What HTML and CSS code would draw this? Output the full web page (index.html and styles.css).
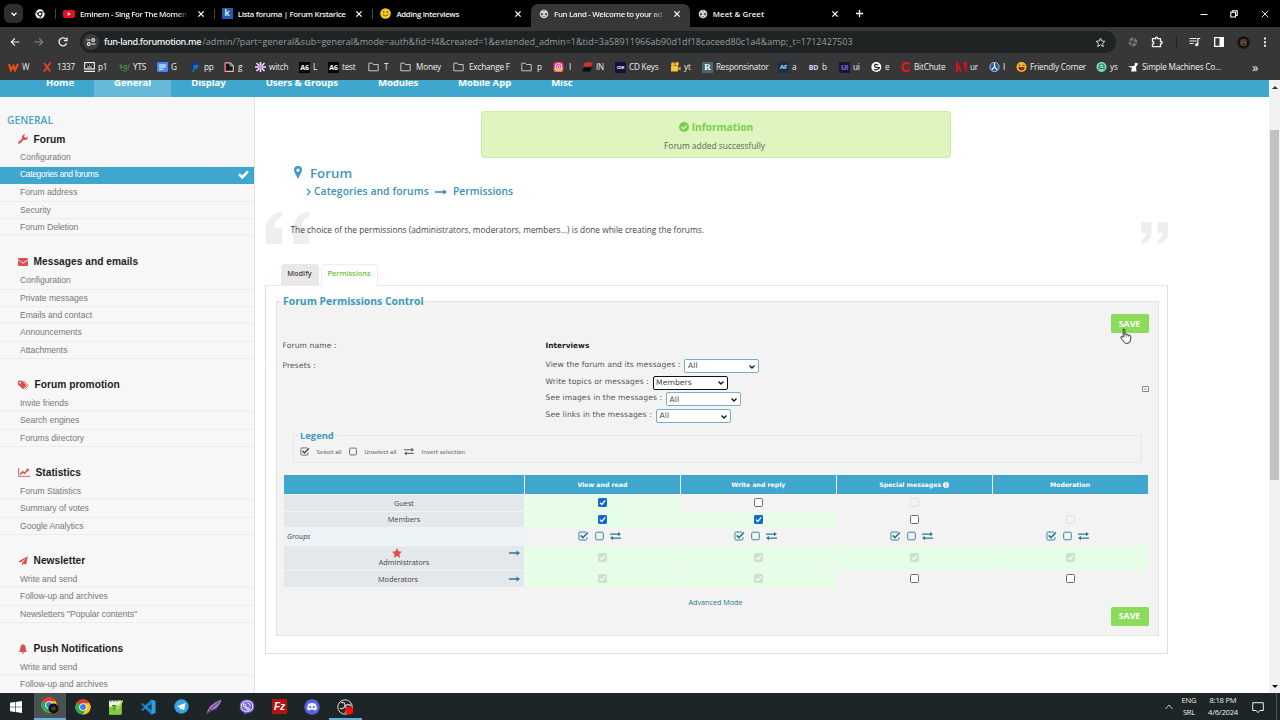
FILE: index.html
```html
<!DOCTYPE html>
<html lang="en">
<head>
<meta charset="utf-8">
<title>Fun Land - Welcome to your admin panel</title>
<link rel="stylesheet" href="styles.css">
</head>
<body>
<svg class="defs" aria-hidden="true">
  <symbol id="close" viewBox="0 0 10 10"><path d="M2.400 2.400l5.200 5.200M7.600 2.400L2.400 7.600" fill="none" stroke="#fff" stroke-width="1.300"/></symbol>
  <symbol id="folder" viewBox="0 0 11 10"><path d="M.8 1.200h3.400l1.200 1.300h4.800v6.300H.8z" fill="none" stroke="#c4c4c4" stroke-width="1"/></symbol>
  <symbol id="land" viewBox="0 0 10 10"><circle cx="5" cy="5" r="4.300" fill="#ddd"/><path d="M2.200 4.200l2 .9-1.700 1.200zM7.800 4.200l-2 .9 1.700 1.200zM3.600 7.600h2.800M5 1v2" fill="#333" stroke="#333" stroke-width=".6"/></symbol>
  <symbol id="chrome" viewBox="0 0 16 16"><circle cx="8" cy="8" r="7.600" fill="#fbc116"/><path d="M8 8L1.400 4.200A7.600 7.600 0 0 1 14.600 4.200z" fill="#e33b2e"/><path d="M8 8L1.400 4.200A7.600 7.600 0 0 0 8 15.600l3-5.200z" fill="#2da94f"/><path d="M8 4.200h6.600a7.600 7.600 0 0 1-6.600 11.400L11 9.800z" fill="#fcc31e"/><circle cx="8" cy="8" r="3.800" fill="#fff"/><circle cx="8" cy="8" r="3" fill="#3f7fe8"/></symbol>
  <symbol id="checked" viewBox="0 0 11 10"><path d="M8.200 1H2.100Q.9 1 .9 2.200v5.600Q.9 9 2.100 9h5.600Q8.900 9 8.900 7.800V6" fill="none" stroke="currentColor" stroke-width=".9"/><path d="M2.700 4.300l2.200 2.200 5-5" fill="none" stroke="currentColor" stroke-width="1.700"/></symbol>
  <symbol id="unchecked" viewBox="0 0 10 10"><rect x="1.200" y="1.200" width="7.600" height="7.600" rx="1.200" fill="none" stroke="currentColor" stroke-width=".9"/></symbol>
  <symbol id="swap" viewBox="0 0 11 10"><path d="M0 3.100h8.500M2.500 7.100H11" stroke="currentColor" stroke-width="1.100"/><path d="M8 .9l3 2.200-3 2.200zM3 4.900L0 7.100l3 2.200z" fill="currentColor"/></symbol>
  <symbol id="arrow" viewBox="0 0 12 8"><path d="M0 4h9.500" stroke="currentColor" stroke-width="1.600"/><path d="M8.300 1.300L12 4 8.300 6.700z" fill="currentColor"/></symbol>
  <symbol id="box" viewBox="0 0 9 9"><rect x=".5" y=".5" width="8" height="8" rx="1.200" fill="#fff" stroke="#6b6b6b"/></symbol>
  <symbol id="box-on" viewBox="0 0 9 9"><rect width="9" height="9" rx="1.400" fill="#1268cf"/><path d="M1.900 4.600l1.900 1.900 3.400-4.100" fill="none" stroke="#fff" stroke-width="1.300"/></symbol>
  <symbol id="box-dim" viewBox="0 0 9 9"><rect x=".5" y=".5" width="8" height="8" rx="1.200" fill="none" stroke="#dfdfdf"/></symbol>
  <symbol id="box-on-dim" viewBox="0 0 9 9"><rect width="9" height="9" rx="1.400" fill="#cfdfcf"/><path d="M1.900 4.600l1.900 1.900 3.400-4.100" fill="none" stroke="#f2fff2" stroke-width="1.300"/></symbol>
  <symbol id="chev" viewBox="0 0 6 4"><path d="M.5.5L3 3 5.500.5" fill="none" stroke="#111" stroke-width="1.300"/></symbol>
</svg>

<header class="tabstrip">
  <div class="tab-search"><svg width="10" height="10" viewBox="0 0 10 10"><path d="M2.500 3.800L5 6.300l2.500-2.500" fill="none" stroke="#fff" stroke-width="1.300"/></svg></div>
  <svg class="pinned" width="10" height="10" viewBox="0 0 10 10"><circle cx="5" cy="5" r="4.700" fill="#f2f2f2"/><circle cx="5" cy="5" r="2" fill="#f2f2f2" stroke="#000" stroke-width="1"/><path d="M5 3h4.300M3.300 6L1.100 2.600M6.700 6L4.600 9.600" stroke="#000" stroke-width=".8"/></svg>
  <div class="tab"><svg class="fav" width="12" height="10" viewBox="0 0 12 10"><rect y="1" width="12" height="8" rx="2" fill="#e8101c"/><path d="M4.700 3.200v3.600L8 5z" fill="#fff"/></svg><span class="tab-title fade">Eminem - Sing For The Momen</span><svg class="x"><use href="#close"/></svg></div>
  <div class="tab"><span class="fav kfav">k</span><span class="tab-title">Lista foruma | Forum Krstarice</span><svg class="x"><use href="#close"/></svg></div>
  <div class="tab"><svg class="fav" width="11" height="11" viewBox="0 0 11 11"><circle cx="5.500" cy="5.500" r="5.300" fill="#f8c92c"/><circle cx="3.700" cy="4" r=".8" fill="#553b00"/><circle cx="7.300" cy="4" r=".8" fill="#553b00"/><path d="M2.600 6.500q2.900 3 5.800 0" fill="none" stroke="#7a4e00" stroke-width=".9"/></svg><span class="tab-title">Adding interviews</span><svg class="x"><use href="#close"/></svg></div>
  <div class="tab active"><svg class="fav" width="10" height="10"><use href="#land"/></svg><span class="tab-title fade">Fun Land - Welcome to your ad</span><svg class="x"><use href="#close"/></svg></div>
  <div class="tab"><svg class="fav" width="10" height="10"><use href="#land"/></svg><span class="tab-title wide">Meet &amp; Greet</span><svg class="x"><use href="#close"/></svg></div>
  <div class="newtab"><svg width="9" height="9" viewBox="0 0 9 9"><path d="M4.500 1v7M1 4.500h7" stroke="#fff" stroke-width="1.300"/></svg></div>
  <div class="window-buttons">
    <svg width="8" height="8" viewBox="0 0 8 8"><path d="M.5 4.500h7" stroke="#fff"/></svg>
    <svg width="8" height="8" viewBox="0 0 8 8"><path d="M.8 2.300h4.700V7H.8zM2.300 2.300V.8h4.900v4.700H5.500" fill="none" stroke="#fff" stroke-width="1.100"/></svg>
    <svg width="8" height="8" viewBox="0 0 8 8"><path d="M.7.7l6.600 6.600M7.300.7L.7 7.300" stroke="#fff" stroke-width=".9"/></svg>
  </div>
</header>

<div class="toolbar">
  <svg class="tb-back" width="10" height="10" viewBox="0 0 10 10"><path d="M9.300 5H1.300M4.900 1.400L1.300 5l3.600 3.600" fill="none" stroke="#f0f0f0" stroke-width="1.200"/></svg>
  <svg class="tb-fwd" width="10" height="10" viewBox="0 0 10 10"><path d="M.7 5h8M5.100 1.400L8.700 5 5.100 8.600" fill="none" stroke="#858585" stroke-width="1.100"/></svg>
  <svg class="tb-reload" width="10" height="10" viewBox="0 0 10 10"><path d="M8.600 6.300A3.900 3.900 0 1 1 8 2.400M9 .6v3.100H5.900" fill="none" stroke="#f0f0f0" stroke-width="1.300"/></svg>
  <div class="address">
    <span class="site"><svg width="10" height="10" viewBox="0 0 10 10"><path d="M.6 3h4M5.500 7h4" stroke="#eee" stroke-width="1.200"/><circle cx="7.200" cy="3" r="1.400" fill="none" stroke="#eee" stroke-width="1.100"/><circle cx="2.800" cy="7" r="1.400" fill="none" stroke="#eee" stroke-width="1.100"/></svg></span>
    <span class="url"><b>fun-land.forumotion.me</b><span>/admin/?part=general&amp;sub=general&amp;mode=auth&amp;fid=f4&amp;created=1&amp;extended_admin=1&amp;tid=3a58911966ab90d1df18caceed80c1a4&amp;amp;_t=1712427503</span></span>
    <svg class="star" width="11" height="11" viewBox="0 0 11 11"><path d="M5.500 1l1.300 3 3.200.3-2.400 2.100.7 3.200-2.800-1.700-2.800 1.700.7-3.200L1 4.300 4.200 4z" fill="none" stroke="#d0d0d0" stroke-width="1"/></svg>
  </div>
  <div class="tools">
    <svg width="10" height="10" viewBox="0 0 10 10"><circle cx="5" cy="5" r="4.400" fill="#777"/><path d="M0 4l4.500 1L7 0M3 10l1.500-5L10 7" stroke="#373737" fill="none" stroke-width="1.300"/></svg>
    <svg width="12" height="12" viewBox="0 0 12 12"><path d="M1.500 2.700h3q-.3-1.500 1-1.500t1 1.500h3v2.800q1.600-.2 1.600 1T9.500 7.600v3h-8V8q1.400 0 1.400-1.200T1.500 5.500z" fill="none" stroke="#eee" stroke-width="1.300"/></svg>
    <i class="sep"></i>
    <svg width="12" height="10" viewBox="0 0 12 10"><path d="M.5 1.500h7M.5 4h7M.5 6.500h4M8.800 8V1.500h2.500" fill="none" stroke="#eee" stroke-width="1.200"/><circle cx="7.700" cy="7.700" r="1.600" fill="#eee"/></svg>
    <svg width="10" height="10" viewBox="0 0 10 10"><path d="M.7.7h8.600v8.600H.7z" fill="none" stroke="#fff" stroke-width="1.300"/><path d="M5.500 1H9v8H5.500z" fill="#fff"/></svg>
    <svg width="13" height="13" viewBox="0 0 13 13"><circle cx="6.500" cy="6.500" r="6.300" fill="#171311"/><circle cx="6.500" cy="6.500" r="3.400" fill="#6b4734"/><path d="M4.500 5h1.300M7.200 5h1.300M5 8h3" stroke="#1c1210"/></svg>
    <svg width="4" height="10" viewBox="0 0 4 10"><path d="M1 .6h2v2H1zM1 4.200h2v2H1zM1 7.800h2v2H1z" fill="#eee"/></svg>
  </div>
</div>

<nav class="bookmarks">
  <a><svg class="bi" viewBox="0 0 11 10"><path d="M1 2l2 6 2.500-4L7 8l3-6" fill="none" stroke="#f04a14" stroke-width="2.300"/></svg>W</a>
  <a><svg class="bi" viewBox="0 0 11 10"><path d="M1 1l6.500 8.500M7.500.5L1 9.500" fill="none" stroke="#d8432c" stroke-width="2"/></svg>1337</a>
  <a><svg class="bi" viewBox="0 0 11 10"><path d="M.7.600h9.600v6.200H.7zM0 9.300h11" fill="#111" stroke="#eee" stroke-width="1.200"/><path d="M2.500 3h1M5 3h1M7.500 3h1M3 5h5" stroke="#fff"/></svg>p1</a>
  <a><svg class="bi" viewBox="0 0 11 10"><path d="M1 2q0 7 4.500 7T10 2" fill="none" stroke="#3d9e39" stroke-width=".8"/><path d="M2.500 2.500v3h2M5.500 3.500h2.200v3H5.500z" fill="none" stroke="#3d9e39" stroke-width=".9"/></svg>YTS</a>
  <a><svg class="bi" viewBox="0 0 11 10"><rect width="11" height="10" rx="1.200" fill="#4586ef"/><path d="M2 3h7M2 5h7M2 7.200h4.500" stroke="#fff" stroke-width="1.100"/></svg>G</a>
  <a><svg class="bi" viewBox="0 0 11 10"><path d="M2.500.5h4Q9 1 8 4T4.500 6L4 9H1z" fill="#113a86"/><path d="M4 3h4.500q.5 4-4 4L4 10H2.500z" fill="#1c76c3"/></svg>pp</a>
  <a><svg class="bi" viewBox="0 0 11 10"><path d="M1.200.8h5L9.300 4v5.300H1.200z" fill="#151515" stroke="#e9b7a6" stroke-width="1.200"/><path d="M1.200.5v9" stroke="#ec4674" stroke-width="1.200"/><path d="M6 .8V4h3" fill="none" stroke="#55c9ba"/></svg>g</a>
  <a><svg class="bi" viewBox="0 0 11 10"><path d="M5.500 0v10M0 5h11M1.500 1l8 8M9.500 1l-8 8" stroke="#f3e8ff" stroke-width="1.500"/><circle cx="5.500" cy="5" r="2" fill="#b98bea"/></svg>witch</a>
  <a><span class="bi tile t-black">A6</span>L</a>
  <a><span class="bi tile t-black">A6</span>test</a>
  <a class="f"><svg class="bi"><use href="#folder"/></svg>T</a>
  <a class="f"><svg class="bi"><use href="#folder"/></svg>Money</a>
  <a class="f"><svg class="bi"><use href="#folder"/></svg>Exchange F</a>
  <a class="f"><svg class="bi"><use href="#folder"/></svg>p</a>
  <a class="f"><svg class="bi" viewBox="0 0 11 10"><rect x=".5" width="10" height="10" rx="2.500" fill="#e22e80"/><path d="M1 6l9 0v2q0 2-2 2H3Q1 10 1 8z" fill="#f47a2d"/><rect x="2.300" y="1.800" width="6.400" height="6.400" rx="2" fill="none" stroke="#fff" stroke-width=".9"/><circle cx="5.500" cy="5" r="1.500" fill="none" stroke="#fff" stroke-width=".9"/></svg>I</a>
  <a><svg class="bi" viewBox="0 0 11 10"><path d="M3 .5h8l-2 4H1z" fill="#df2f35"/><path d="M2 5.500h8l-2 4H0z" fill="#0b0b0b"/></svg>IN</a>
  <a><span class="bi tile t-cd">CDK</span>CD Keys</a>
  <a><svg class="bi" viewBox="0 0 11 10"><circle cx="3" cy="2.200" r="2" fill="#efb52d"/><circle cx="7" cy="2" r="2" fill="#efb52d"/><rect x="1" y="4" width="7" height="5.500" fill="#f4c443"/><path d="M8 6l2.600-1.500v4L8 7.500z" fill="#e29c1c"/></svg>yt</a>
  <a><span class="bi tile t-r">R</span>Responsinator</a>
  <a><span class="bi tile t-af">AF</span>a</a>
  <a><span class="bi tile t-bd">BD</span>b</a>
  <a><span class="bi tile t-ui">UI</span>ui</a>
  <a><svg class="bi" viewBox="0 0 11 10"><circle cx="5.300" cy="5" r="5" fill="#fff"/><path d="M7.300 3q-3.500-1.500-3.700.5T7 5.500 5 8L3 7.200" fill="none" stroke="#222" stroke-width="1.200"/></svg>e</a>
  <a><svg class="bi" viewBox="0 0 11 10"><path d="M9.500 2.200A4.100 4.100 0 1 0 9.500 7.800" fill="none" stroke="#dd1c25" stroke-width="2.300"/><path d="M5 5h5.500" stroke="#b9141c" stroke-width="1.500"/></svg>BitChute</a>
  <a><svg class="bi" viewBox="0 0 11 10"><path d="M0 0h2l4 10H4L2 5v5H0zM7 0h4v10H9.500V4L8 8z" fill="#d1121b"/></svg>ur</a>
  <a><svg class="bi" viewBox="0 0 11 10"><circle cx="5.500" cy="5" r="4.700" fill="#275b9d" stroke="#cfe0f3" stroke-width=".7"/><path d="M5.500 1v3.500L2.800 8M5.500 4.500L8.200 8" fill="none" stroke="#fff" stroke-width="1.200"/></svg>I</a>
  <a><svg class="bi" viewBox="0 0 11 10"><circle cx="5.500" cy="5" r="5" fill="#f8bd2c"/><path d="M2.200 5h6.600Q8.500 8.500 5.500 8.500T2.200 5z" fill="#8b2f1a"/><path d="M2.500 3.300h2M6.500 3.300h2" stroke="#6b3a00"/></svg>Friendly Corner</a>
  <a><svg class="bi" viewBox="0 0 11 10"><circle cx="5.500" cy="5" r="5" fill="#7fe0bf"/><path d="M3 8V3.500q0-1.500 2.500-1.500T8 3.500V8M4 4.500h1M6.500 4.500h1M4 6.500h3" fill="none" stroke="#25635a" stroke-width="1"/></svg>ys</a>
  <a><svg class="bi" viewBox="0 0 11 10"><path d="M3 9.500L4 6 0 4l5 .2L10.500 1 8 5l.5 4.500z" fill="#fff"/><circle cx="8" cy="2" r="1.300" fill="#fff"/></svg>Simple Machines Co...</a>
  <span class="more">»</span>
</nav>

<div class="viewport">
  <div class="page">
    <nav class="mainnav"><a>Home</a><a class="on">General</a><a>Display</a><a>Users &amp; Groups</a><a>Modules</a><a>Mobile App</a><a>Misc</a></nav>
    <div class="columns">
      <aside class="sidebar">
        <h2>GENERAL</h2>
        <section>
          <h3><svg width="10" height="10" viewBox="0 0 10 10"><path d="M1.300 8.700L5.800 4.200" stroke="#d9504e" stroke-width="2.200" stroke-linecap="round"/><path d="M9.600 2.200A2.900 2.900 0 1 1 7.400.3L6 1.900l.6 1.500 1.600.3z" fill="#d9504e"/></svg><span>Forum</span></h3>
          <a>Configuration</a><a class="sel"><span>Categories and forums</span><svg width="11" height="9" viewBox="0 0 11 9"><path d="M1 4.200l3.200 3.200L10 1.300" fill="none" stroke="#fff" stroke-width="2.600"/></svg></a><a>Forum address</a><a>Security</a><a>Forum Deletion</a>
        </section>
        <section>
          <h3><svg width="10" height="8" viewBox="0 0 10 8"><rect width="10" height="8" rx=".8" fill="#d9504e"/><path d="M0 1.800l5 3.400 5-3.400" fill="none" stroke="#f7f7f7" stroke-width=".9"/></svg><span>Messages and emails</span></h3>
          <a>Configuration</a><a>Private messages</a><a>Emails and contact</a><a>Announcements</a><a>Attachments</a>
        </section>
        <section>
          <h3><svg width="11" height="10" viewBox="0 0 11 10"><path d="M0 .8h4.200L8.800 5.500 5 9.200 0 4.500z" fill="#d9504e"/><path d="M5.500.8L10.300 5.600 6.700 9.200" fill="none" stroke="#d9504e" stroke-width=".9"/><circle cx="2" cy="2.700" r=".9" fill="#f7f7f7"/></svg><span>Forum promotion</span></h3>
          <a>Invite friends</a><a>Search engines</a><a>Forums directory</a>
        </section>
        <section>
          <h3><svg width="12" height="9" viewBox="0 0 12 9"><path d="M.6 0v8.400H12" fill="none" stroke="#d9504e" stroke-width=".9"/><path d="M2.200 6.500l2.500-2.700 1.700 1.400L9.700 2" fill="none" stroke="#d9504e" stroke-width="1.600"/><path d="M7.800.8h3v3z" fill="#d9504e"/></svg><span>Statistics</span></h3>
          <a>Forum Statistics</a><a>Summary of votes</a><a>Google Analytics</a>
        </section>
        <section>
          <h3><svg width="10" height="10" viewBox="0 0 10 10"><path d="M9.800.2L8.200 8.700 5.500 7.500 4 9.700V7L8.300 2 3 6.300.2 5.500z" fill="#d9504e"/></svg><span>Newsletter</span></h3>
          <a>Write and send</a><a>Follow-up and archives</a><a>Newsletters "Popular contents"</a>
        </section>
        <section>
          <h3><svg width="10" height="10" viewBox="0 0 10 10"><path d="M5 .3Q7.700 1 7.700 4t1.700 4H.6Q2.300 7 2.300 4T5 .3zM3.700 8.500h2.600Q6 9.800 5 9.800T3.700 8.500z" fill="#d9504e"/></svg><span>Push Notifications</span></h3>
          <a>Write and send</a><a>Follow-up and archives</a>
        </section>
      </aside>

      <main class="main">
        <div class="notice">
          <strong><svg width="10" height="10" viewBox="0 0 10 10"><circle cx="5" cy="5" r="5" fill="#79cf4d"/><path d="M2.500 5l1.900 1.900 3.200-3.500" fill="none" stroke="#dff5bf" stroke-width="1.400"/></svg><span>Information</span></strong>
          <p>Forum added successfully</p>
        </div>
        <h1><svg width="8" height="13" viewBox="0 0 8 13"><path d="M4 0a4 4 0 0 1 4 4q0 1-.6 2.200L4 13 .6 6.200Q0 5 0 4a4 4 0 0 1 4-4z" fill="#3e9cbf"/><circle cx="4" cy="4.200" r="1.600" fill="#fff"/></svg><span>Forum</span></h1>
        <div class="crumbs"><svg width="5" height="8" viewBox="0 0 5 8"><path d="M1 1l3 3-3 3" fill="none" stroke="#3693b5" stroke-width="1.200"/></svg><span class="c1">Categories and forums</span><svg class="carrow" width="12" height="8"><use href="#arrow"/></svg><span>Permissions</span></div>
        <div class="quote">
          <svg width="45" height="33" viewBox="0 0 45 34"><path d="M17 0v5.500q-8 3-8 12h8V34H0V19Q0 5 17 0zM45 0v5.500q-8 3-8 12h8V34H28V19Q28 5 45 0z" fill="#eee"/></svg>
          <p>The choice of the permissions (administrators, moderators, members...) is done while creating the forums.</p>
          <svg width="27" height="22" viewBox="0 0 27 22"><path d="M0 0h10.500v11Q10.500 20 1 22L0 18.500q5-2.500 5-7.500H0zM16.500 0H27v11Q27 20 17.500 22l-1-3.500q5-2.500 5-7.500h-5z" fill="#eee"/></svg>
        </div>
        <div class="subtabs"><a>Modify</a><a class="on">Permissions</a></div>
        <div class="panel">
          <div class="fieldset">
            <div class="flegend">Forum Permissions Control</div>
            <div class="save-row top"><button>SAVE</button></div>
            <div class="form">
              <span class="lab">Forum name :</span><b>Interviews</b>
              <span class="lab pre">Presets :</span>
              <div class="presets">
                <label><span class="l1">View the forum and its messages :</span><span class="select">All<svg><use href="#chev"/></svg></span></label>
                <label><span class="l2">Write topics or messages :</span><span class="select focus">Members<svg><use href="#chev"/></svg></span></label>
                <label><span class="l3">See images in the messages :</span><span class="select">All<svg><use href="#chev"/></svg></span></label>
                <label><span class="l4">See links in the messages :</span><span class="select">All<svg><use href="#chev"/></svg></span></label>
              </div>
              <svg class="mini" width="7" height="6" viewBox="0 0 7 6"><path d="M.5.5h6v5h-6z" fill="#fff" stroke="#888"/><path d="M2 3h3" stroke="#999"/></svg>
            </div>
            <div class="legend">
              <div class="ltitle">Legend</div>
              <div class="litems"><svg width="10" height="9"><use href="#checked"/></svg><span class="k1">Select all</span><svg width="10" height="9"><use href="#unchecked"/></svg><span class="k2">Unselect all</span><svg width="10" height="9"><use href="#swap"/></svg><span class="k3">Invert selection</span></div>
            </div>
            <div class="grid">
              <div class="th"></div><div class="th">View and read</div><div class="th">Write and reply</div><div class="th">Special messages<svg width="6" height="6" viewBox="0 0 6 6"><circle cx="3" cy="3" r="3" fill="#fff"/><path d="M3 .9v1M3 2.500v2.500" stroke="#3fa6cd" stroke-width="1"/></svg></div><div class="th">Moderation</div>
              <div class="rl">Guest</div><div class="g"><svg class="cb"><use href="#box-on"/></svg></div><div><svg class="cb"><use href="#box"/></svg></div><div><svg class="cb"><use href="#box-dim"/></svg></div><div></div>
              <div class="rl">Members</div><div class="g"><svg class="cb"><use href="#box-on"/></svg></div><div class="g"><svg class="cb"><use href="#box-on"/></svg></div><div><svg class="cb"><use href="#box"/></svg></div><div><svg class="cb"><use href="#box-dim"/></svg></div>
              <div class="rg">Groups</div>
              <div class="act"><svg><use href="#checked"/></svg><svg><use href="#unchecked"/></svg><svg><use href="#swap"/></svg></div>
              <div class="act"><svg><use href="#checked"/></svg><svg><use href="#unchecked"/></svg><svg><use href="#swap"/></svg></div>
              <div class="act"><svg><use href="#checked"/></svg><svg><use href="#unchecked"/></svg><svg><use href="#swap"/></svg></div>
              <div class="act"><svg><use href="#checked"/></svg><svg><use href="#unchecked"/></svg><svg><use href="#swap"/></svg></div>
              <div class="rl split"><i></i><span class="adm"><svg width="10" height="10" viewBox="0 0 10 10"><path d="M5 0l1.500 3.300 3.500.4-2.600 2.400.7 3.600L5 7.900 1.900 9.700l.7-3.600L0 3.700l3.500-.4z" fill="#d9504e"/></svg><span>Administrators</span></span><svg class="go"><use href="#arrow"/></svg></div><div class="g"><svg class="cb"><use href="#box-on-dim"/></svg></div><div class="g"><svg class="cb"><use href="#box-on-dim"/></svg></div><div class="g"><svg class="cb"><use href="#box-on-dim"/></svg></div><div class="g"><svg class="cb"><use href="#box-on-dim"/></svg></div>
              <div class="rl split"><i></i><span class="mod">Moderators</span><svg class="go mid"><use href="#arrow"/></svg></div><div class="g"><svg class="cb"><use href="#box-on-dim"/></svg></div><div class="g"><svg class="cb"><use href="#box-on-dim"/></svg></div><div><svg class="cb"><use href="#box"/></svg></div><div><svg class="cb"><use href="#box"/></svg></div>
            </div>
            <div class="advanced">Advanced Mode</div>
            <div class="save-row bottom"><button>SAVE</button></div>
          </div>
        </div>
      </main>
    </div>
  </div>
  <div class="scrollbar">
    <svg width="6" height="3" viewBox="0 0 6 3"><path d="M0 3l3-3 3 3z" fill="#333"/></svg>
    <div class="thumb"></div>
    <svg width="6" height="3" viewBox="0 0 6 3"><path d="M0 0l3 3 3-3z" fill="#111"/></svg>
  </div>
</div>

<footer class="taskbar">
  <div class="apps">
    <span><svg width="12" height="12" viewBox="0 0 12 12"><path d="M0 1.800l5-.8v4.700H0zM5.600.9L12 0v5.700H5.600zM0 6.300h5V11l-5-.8zM5.600 6.300H12V12l-6.400-.9z" fill="#fff"/></svg></span>
    <span class="cur"><svg width="18" height="17" viewBox="0 0 18 17"><use href="#chrome" width="16" height="16"/><circle cx="12.500" cy="11.500" r="5" fill="#111"/><circle cx="12.500" cy="11.500" r="2.200" fill="#5c3b26"/></svg></span>
    <span><svg width="16" height="16"><use href="#chrome"/></svg></span>
    <span><svg width="15" height="16" viewBox="0 0 15 16"><rect x="1" y="1.500" width="12.500" height="14" rx="1" fill="#e9f3d9"/><path d="M1 8l12.500-2v9.500H1z" fill="#7fc93a"/><path d="M3 1v2M6 1v2M9 1v2M4 6.500h4M6 6.500v5" stroke="#4c6d36" fill="none"/><path d="M14.500 1.500L9 11" stroke="#c6d66a" stroke-width="1.500"/></svg></span>
    <span><svg width="16" height="16" viewBox="0 0 16 16"><path d="M11.500.5L15.500 2v12l-4 1.500L4 8z" fill="#2ba0e6"/><path d="M11.500 4.500v7L7 8z" fill="#1f2526"/><path d="M1 5l1.500-1L11.500 11v4.500zM1 11l1.500 1L11.500 5V.5z" fill="#1681c8"/></svg></span>
    <span><svg width="15" height="15" viewBox="0 0 15 15"><circle cx="7.500" cy="7.500" r="7.200" fill="#35a6dd"/><path d="M3 7.300L11.500 4l-1.400 7.400-2.700-2-1.300 1.300-.4-2.300z" fill="#fff"/></svg></span>
    <span><svg width="16" height="16" viewBox="0 0 16 16"><path d="M.5 15.500Q2 5 15.500.5 14 9 4.500 12z" fill="#a678c5"/><path d="M1 15Q5 8 13 3M4 12l7-2" stroke="#4c2e69" fill="none" stroke-width=".9"/></svg></span>
    <span><svg width="16" height="16" viewBox="0 0 16 16"><path d="M8 .5q7.300 0 7.300 6.800T8 14L5.500 16v-2.300Q.7 12.600.7 7.300.7.500 8 .5z" fill="#7963dc"/><path d="M8 2.100q5.700 0 5.700 5.200T8 12.400q-5.700 0-5.700-5.100T8 2.100z" fill="none" stroke="#fff" stroke-width=".8"/><path d="M5 4.500q-1.500 1 0 3t4 3.300q1.500.3 1.800-1L9 8.500l-1 .6Q6.700 8.500 6.400 7l.6-.7zM8.300 4q2.700.2 2.900 3" fill="none" stroke="#fff" stroke-width="1"/></svg></span>
    <span><span class="fz">Fz</span></span>
    <span><svg width="16" height="16" viewBox="0 0 16 16"><circle cx="8" cy="8" r="7.700" fill="#5764e6"/><path d="M4.500 4.700q3.500-1.200 7 0Q13 8 12.800 10.500q-1.500 1-2.500 1l-.7-1H6.400l-.7 1q-1 0-2.500-1Q3 8 4.500 4.700z" fill="#fff"/><circle cx="6.200" cy="8.200" r="1.100" fill="#5764e6"/><circle cx="9.800" cy="8.200" r="1.100" fill="#5764e6"/></svg></span>
    <span class="run"><svg width="17" height="16" viewBox="0 0 17 16"><circle cx="8" cy="8" r="7.200" fill="#242424" stroke="#ddd" stroke-width="1"/><path d="M4 4q4-2 4 3Q6 11 3 9M8 7q4-3 6 0M8 7q3 3 0 7" fill="none" stroke="#ccc" stroke-width="1.300"/><circle cx="12.300" cy="11.500" r="4" fill="#f90d0d"/></svg></span>
  </div>
  <div class="tray">
    <svg width="8" height="6" viewBox="0 0 8 6"><path d="M.5 5L4 1l3.500 4" fill="none" stroke="#ddd" stroke-width=".9"/></svg>
    <div class="lang"><span>ENG</span><span>SRL</span></div>
    <div class="clock"><span>8:18 PM</span><span>4/6/2024</span></div>
    <svg class="note" width="12" height="12" viewBox="0 0 12 12"><path d="M.7.700h10.600v7.800H7.800L6 10.700 4.200 8.500H.7z" fill="none" stroke="#eee" stroke-width="1"/></svg>
  </div>
</footer>

<svg class="cursor" width="12" height="16" viewBox="0 0 12 16"><path d="M3.200 1.200Q4.500.4 4.800 1.700V6q1.600-.7 2 .5 1.500-.5 1.900.7 1.800-.3 2 1.300v2.700Q10.500 15 8 15.300H5.800Q4.300 15 3.300 13L.8 9.700Q.7 8 2.500 8.700l.7.700z" fill="#fff" stroke="#222" stroke-width=".9"/><path d="M4.800 6v2.500M6.800 6.500v2M8.700 7.200v1.500" stroke="#222" stroke-width=".7"/></svg>
</body>
</html>
```
FILE: styles.css
```css
* { box-sizing: border-box; }
html, body { margin: 0; width: 1280px; height: 720px; overflow: hidden; }
body { display: flex; flex-direction: column; position: relative; background: #fff; font-family: "Open Sans", "Noto Sans", sans-serif; color: #444; white-space: nowrap; }
svg { display: block; flex: none; }
p, h1, h2, h3 { margin: 0; }
.defs { position: absolute; width: 0; height: 0; }

/* browser chrome */
.tabstrip { height: 27px; flex: none; display: flex; align-items: center; background: #000; color: #f2f2f2; font-size: 7.900px; font-weight: 600; }
.tab-search { width: 19px; height: 19px; margin-left: 4px; border-radius: 6px; background: #2f2f2f; display: grid; place-items: center; }
.pinned { margin: 0 10px 0 12px; }
.tab { width: 158.700px; height: 23px; align-self: flex-end; display: flex; align-items: center; padding: 0 8px 4px; }
.tab::before { content: ""; width: 1px; height: 10px; background: #444; margin: 0 7px 0 -8px; }
.tab.active { background: #373737; border-radius: 7px 7px 0 0; }
.tab.active::before { background: transparent; }
.active + .tab::before { background: transparent; }
.fav { flex: none; margin-right: 5px; }
.kfav { width: 11px; height: 11px; background: #1f5fae; color: #fff; font-size: 9px; line-height: 10px; text-align: center; }
.tab-title { flex: 1; line-height: 12px; letter-spacing: -.33px; min-width: 0; }
.tab-title.wide { letter-spacing: .05px; }
.fade { -webkit-mask-image: linear-gradient(90deg, #000 88%, transparent); mask-image: linear-gradient(90deg, #000 88%, transparent); }
.x { width: 10px; height: 10px; margin-left: 7px; }
.newtab { margin-left: 7px; }
.window-buttons { margin-left: auto; display: flex; gap: 22.500px; margin-right: 11.500px; }

.toolbar { height: 29px; flex: none; background: #373737; display: flex; align-items: center; padding-left: 10px; padding-top: 1px; }
.tb-fwd { margin-left: 14px; }
.tb-reload { margin-left: 14px; }
.address { width: 1036px; height: 22px; margin-left: 12px; border-radius: 11px; background: #202324; display: flex; align-items: center; padding: 0 10px 0 3px; }
.site { width: 16px; height: 16px; border-radius: 8px; background: #3a3c3d; display: grid; place-items: center; }
.url { margin-left: 5px; flex: 1; font-size: 9px; line-height: 14px; color: #9a9c9d; display: flex; letter-spacing: .03px; }
.url b { font-weight: 600; color: #f0f0f0; width: 98.500px; letter-spacing: -.36px; }
.tools { flex: 1; display: flex; align-items: center; justify-content: space-between; padding: 0 13px 0 12px; }
.sep { width: 1px; height: 10px; background: #1b1b1b; }

.bookmarks { height: 24px; flex: none; background: #373737; padding: 0 0 2px 8px; display: grid; align-items: center; grid-template-columns: 35px 41px 35px 38px 33px 34px 31px 44px 29px 40px 32px 53px 68px 32px 29px 33px 55px 32px 76px 30px 31px 32px 29px 56px 33px 27px 80px 32px 124px 20px; color: #eee; font-size: 8.200px; }
.bookmarks a { display: flex; align-items: center; gap: 3px; letter-spacing: -.2px; line-height: 12px; }
.bookmarks a.f { gap: 5px; }
.bi { width: 11px; height: 10px; flex: none; }
.tile { height: 11px; font-size: 6px; font-weight: 700; line-height: 11px; text-align: center; color: #fff; }
.t-black { background: #050505; font-size: 7px; }
.t-cd { background: #15113d; font-size: 4px; }
.t-r { background: #47686f; font-family: "Liberation Serif", serif; font-size: 9px; }
.t-af { background: #12324e; color: #bfe0ff; }
.t-bd { color: #d9d4ff; font-size: 7px; }
.t-ui { background: #1b1538; color: #8a6cf0; font-size: 7px; }
.more { font-size: 13px; line-height: 12px; }

/* page */
.viewport { height: 613px; flex: none; display: flex; }
.page { flex: 1; height: 613px; overflow: hidden; display: flex; flex-direction: column; }
.mainnav { height: 17px; flex: none; display: flex; background: #3fa6cd; color: #fff; padding-left: 26px; clip-path: inset(0); }
.mainnav a { padding: 0 20px; height: 17px; line-height: 5px; font-size: 9.600px; font-weight: 700; letter-spacing: -.08px; }
.mainnav .on { background: #66b9d8; }
.columns { flex: 1; display: flex; min-height: 0; }
.sidebar { width: 255px; flex: none; background: #f7f7f7; border-right: 1px solid #e3e3e3; font-family: "Liberation Sans", Arial, sans-serif; overflow: hidden; }
.sidebar h2 { height: 17px; margin: 15px 0 0 7px; font: 600 10.300px/17.500px "Open Sans", sans-serif; color: #4ba3c3; }
.sidebar section { margin-bottom: 15.400px; }
.sidebar h3 { height: 20.400px; display: flex; align-items: center; gap: 5.500px; padding-left: 18px; font-size: 10.200px; color: #1d1d1d; letter-spacing: .02px; }
.sidebar a { height: 17.400px; line-height: 17.800px; padding-left: 20px; font-size: 8.600px; letter-spacing: -.03px; color: #777; border-bottom: 1px solid #ededed; display: block; }
.sidebar a.sel { display: flex; justify-content: space-between; align-items: center; background: #3fa6cd; color: #fff; padding-right: 5px; border-color: #3fa6cd; letter-spacing: -.41px; }

.main { width: 903px; margin-left: 9.500px; display: flex; flex-direction: column; flex: none; }
.notice { width: 470px; height: 47px; margin: 14px auto 0; padding-top: 7px; background: #dff5bf; border: 1px solid #c9eda2; border-radius: 3px; text-align: center; }
.notice strong { display: flex; justify-content: center; align-items: center; gap: 3px; height: 16px; font-size: 10.200px; color: #79cf4d; }
.notice p { margin-top: 2px; font-size: 8.400px; line-height: 18px; color: #5b6652; padding-right: 3px; }
.main h1 { height: 29px; display: flex; align-items: center; gap: 8px; padding-left: 29.500px; font-size: 13.300px; font-weight: 600; color: #3f97b8; }
.crumbs { height: 9px; display: flex; align-items: center; padding-left: 41.500px; font-size: 10.300px; line-height: 9px; font-weight: 600; color: #3693b5; margin-bottom: 15px; }
.crumbs .c1 { margin-left: 3px; width: 115px; letter-spacing: .09px; }
.carrow { margin: 0 6px; }
.quote { height: 34px; display: flex; margin-bottom: 19px; }
.quote p { position: relative; margin: 9.500px auto 0 -19px; font-size: 8.300px; line-height: 18px; color: #444; letter-spacing: .03px; }
.quote > svg:last-child { margin-top: 11px; }
.subtabs { height: 21px; flex: none; display: flex; gap: 2px; padding-left: 16px; font-size: 7.400px; font-weight: 600; line-height: 18px; }
.subtabs a { width: 38px; text-align: center; background: #e9e7e7; border-radius: 4px 4px 0 0; color: #444; }
.subtabs .on { width: 57px; height: 22px; background: #fff; border: 1px solid #eee; border-bottom: 0; color: #71bd3e; position: relative; line-height: 17px; }
.panel { height: 369px; flex: none; border: 1px solid #ddd; border-top-color: #e8e8e8; padding: 15px 8px 0 10px; }
.fieldset { height: 335px; background: #f3f3f3; border: 1px solid #e3e3e3; }
.flegend { width: 144px; height: 14px; margin: -8px 0 0 4.500px; padding-left: 2px; font-size: 10.400px; line-height: 14px; font-weight: 700; color: #3e98ba; background: linear-gradient(#fff 50%, #f3f3f3 50%); }
.save-row { display: flex; justify-content: flex-end; padding-right: 9px; }
.save-row button { width: 38px; height: 19px; padding: 0; border: 0; border-radius: 1.500px; background: #8cdb5b; color: #fff; font: 700 8.800px/18px "Open Sans", sans-serif; }
.save-row.top { margin-top: 6px; }
.form { font-family: "DejaVu Sans", sans-serif; font-size: 7.600px; letter-spacing: .1px; color: #555; display: grid; grid-template-columns: 263px 592.500px 1fr; grid-template-rows: 19px 78px; padding: 4px 0 0 6px; }
.form > * { line-height: 18px; }
.form > b { color: #222; grid-column: 2 / 4; font-size: 7.400px; letter-spacing: 0; }
.form .pre { line-height: 19px; }
.presets { display: flex; flex-direction: column; gap: 2.700px; padding-top: 3px; }
.presets label { display: flex; height: 14px; line-height: 12.500px; }
.l1 { width: 138.500px; } .l2 { width: 107px; } .l3 { width: 120px; } .l4 { width: 110px; }
.select { width: 75px; height: 14px; border: 1px solid #78aec4; border-radius: 2px; background: #fff; display: flex; justify-content: space-between; align-items: center; padding: 1px 3px 0 3px; color: #444; }
.select svg { width: 6px; height: 4px; }
.select.focus { border: 1.500px solid #111; padding: 1px 3px 0 2.500px; }
.mini { margin: 30px 0 0 4px; }
.legend { width: 849px; height: 28px; margin: 1px 0 0 16.500px; border: 1px solid #e6e6e6; }
.ltitle { width: 38px; margin: -7px 0 0 5px; padding-left: 1px; background: #f3f3f3; font-size: 9.400px; line-height: 13px; font-weight: 700; color: #3e98ba; }
.litems { height: 19px; display: flex; align-items: center; padding-left: 5.500px; font: 5.500px/10px "DejaVu Sans", sans-serif; color: #555; }
.k1 { width: 31px; margin-left: 7px; } .k2 { width: 39px; margin-left: 7px; } .k3 { margin-left: 8px; letter-spacing: .05px; }
.grid { width: 863.500px; margin: 12px 0 0 7.500px; display: grid; grid-template-columns: 240px repeat(4, 1fr); grid-template-rows: 19px 16px 15.500px 17px 24.500px 16px; column-gap: 1px; row-gap: .8px; font-size: 7.300px; }
.grid > div { display: flex; align-items: center; justify-content: center; }
.grid > .th { background: #3fa6cd; color: #fff; font: 700 6.200px/12px "DejaVu Sans", sans-serif; gap: 2px; }
.grid > .rl { background: #e4e8eb; color: #444; }
.grid > .rg { background: #edf4f8; justify-content: flex-start; padding-left: 3px; font-style: italic; }
.grid > .g { background: #e6fee6; }
.cb { width: 9px; height: 9px; }
.grid > .act { gap: 5px; color: #287a8d; padding-right: 6px; }
.act svg { width: 11px; height: 10px; }
.grid > .split { display: grid; grid-template-columns: 20px 1fr 20px; color: #444; }
.adm { display: flex; flex-direction: column; align-items: center; line-height: 9.500px; }
.adm svg { margin-right: 14px; }
.mod { text-align: center; padding-right: 12px; line-height: 12px; }
.go { width: 11px; height: 8px; color: #287a8d; align-self: start; margin: 3px 0 0 5px; }
.go.mid { align-self: center; margin-top: 0; }
.advanced { margin-top: 8px; text-align: center; padding-right: 3px; font-size: 7.200px; line-height: 14px; color: #2a7386; }
.save-row.bottom { margin-top: -2px; }

.scrollbar { width: 11px; flex: none; background: #f1f1f1; display: flex; flex-direction: column; align-items: center; padding: 6px 0 5px; }
.thumb { width: 9px; height: 350px; margin: 41px 0 auto; background: #c1c1c1; }

/* taskbar */
.taskbar { height: 27px; flex: none; background: #1e2526; display: flex; justify-content: space-between; }
.apps { display: flex; }
.apps > span { width: 32.800px; display: grid; place-items: center; }
.apps .cur { background: #4b5152; border-bottom: 2px solid #69add9; margin-left: .8px; }
.apps .run { box-shadow: inset 0 -2px #69add9; }
.fz { width: 15px; height: 15px; background: #b51210; color: #fff; font: italic 700 10px/15px "Liberation Sans", sans-serif; text-align: center; }
.tray { display: flex; align-items: center; color: #eee; font-size: 7.600px; line-height: 11.500px; border-right: 1px solid #555; margin-right: 3px; }
.tray div { display: flex; flex-direction: column; align-items: center; letter-spacing: -.2px; }
.tray .lang { width: 16px; margin-left: 8px; }
.tray .clock { width: 34px; margin-left: 9px; }
.tray .note { margin: 2px 12px 0 12px; }

.cursor { position: absolute; left: 1120px; top: 328px; }
```
